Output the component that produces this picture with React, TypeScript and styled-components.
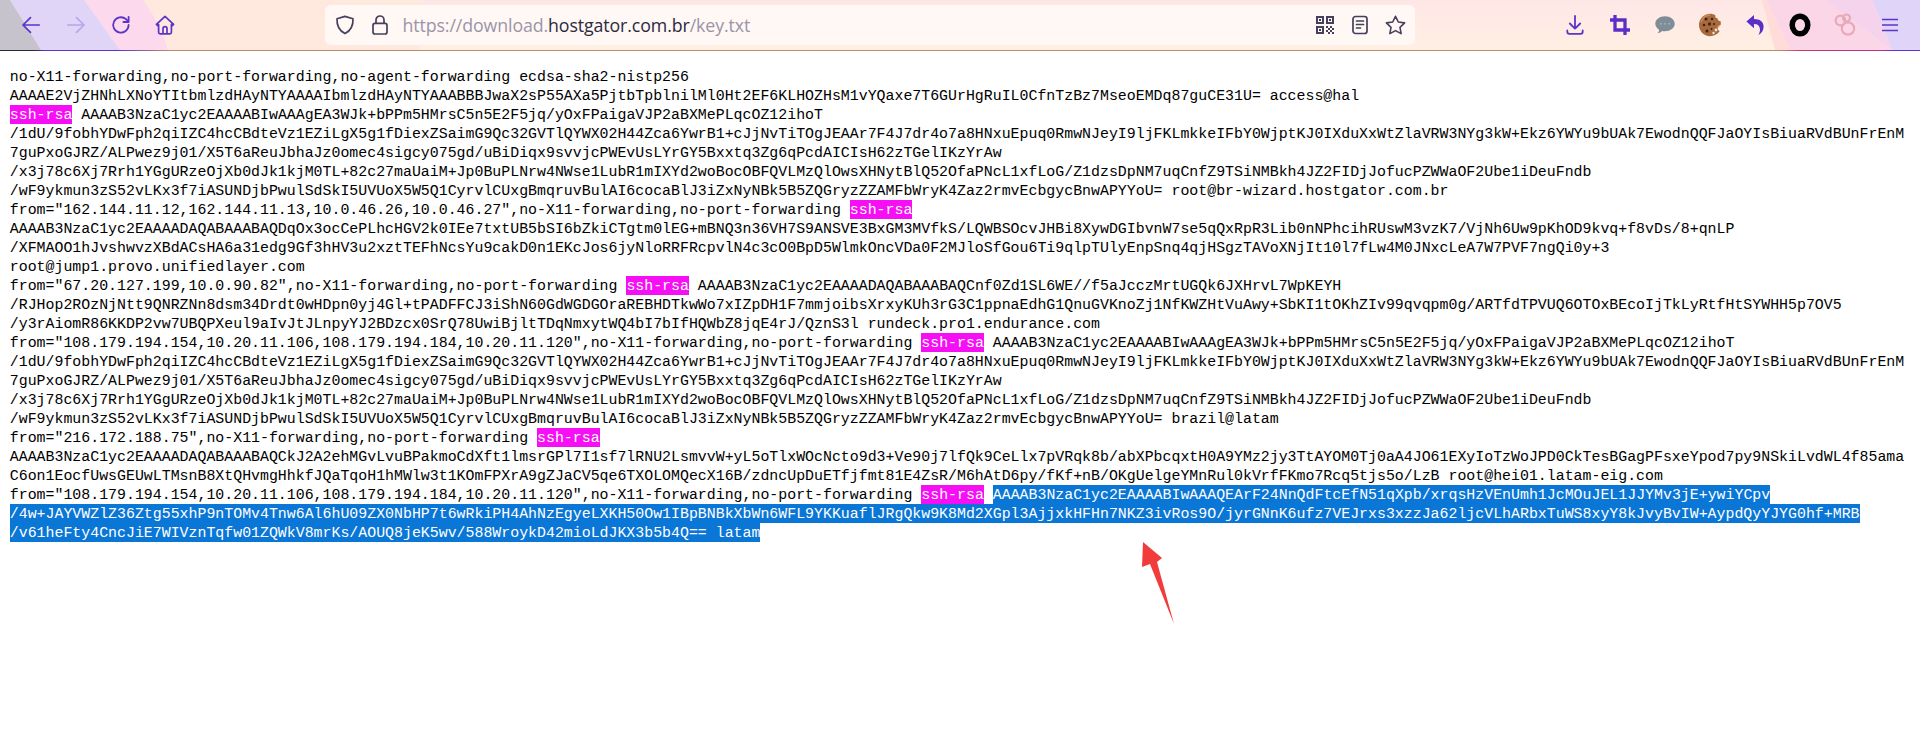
import React from "react";
import styled, { createGlobalStyle } from "styled-components";

const Global = createGlobalStyle`
  html, body { margin: 0; padding: 0; background: #fff; }
  #root { width: 1920px; height: 746px; overflow: hidden; position: relative; }
`;

const Page = styled.div`
  position: relative;
  width: 1920px;
  height: 746px;
  background: #fff;
`;

const Toolbar = styled.header`
  position: relative;
  display: flex;
  align-items: center;
  justify-content: space-between;
  box-sizing: border-box;
  height: 51px;
  padding: 0 8px 1px 8px;
  background: linear-gradient(180deg, #ffe6e6 0%, #fff0e3 100%);
  overflow: hidden;
  &::after {
    content: "";
    position: absolute;
    left: 0;
    right: 0;
    bottom: 0;
    height: 1px;
    background: linear-gradient(90deg, #2a2a33 0, #2a2a33 34px, #5a35c4 44px, #5a35c4 116px, #bf8a70 170px, #c08a6f 1780px, #c9386c 1800px, #c32f8c 1880px, #5a35d0 1893px);
  }
`;

const ThemeArt = styled.svg`
  position: absolute;
  left: 0;
  top: 0;
  width: 1920px;
  height: 50px;
`;

const IconGroup = styled.div`
  position: relative;
  display: flex;
  align-items: center;
`;

const IconSlot = styled.div<{ $w?: number }>`
  display: flex;
  align-items: center;
  justify-content: center;
  width: ${(p) => p.$w ?? 45}px;
  height: 40px;
  flex: none;
`;

const UrlBar = styled.div`
  position: relative;
  display: flex;
  align-items: center;
  box-sizing: border-box;
  width: 1090px;
  height: 40px;
  padding-left: 2px;
  background: #fff8f4;
  border-radius: 6px;
`;

const UrlText = styled.div`
  flex: 1;
  margin-left: 6px;
  font-family: "Open Sans", "Noto Sans", sans-serif;
  font-size: 17.75px;
  letter-spacing: -0.1px;
  line-height: 40px;
  color: #9a95a8;
  white-space: pre;
`;

const Host = styled.span`
  color: #2b2a3f;
`;

const UrlActions = styled.div`
  display: flex;
  align-items: center;
  margin-right: 2px;
`;

const Content = styled.main`
  padding: 16px 0 0 9.8px;
  font-family: "Liberation Mono", "DejaVu Sans Mono", monospace;
  font-size: 14.9px;
  color: #000;
`;

const Row = styled.div`
  height: 19px;
  line-height: 21px;
  white-space: pre;
`;

const Mark = styled.span`
  display: inline-block;
  height: 19px;
  background: #f60ff5;
  color: #fff;
`;

const Picked = styled.span`
  display: inline-block;
  height: 19px;
  background: #0a76d6;
  color: #fff;
`;

const Pointer = styled.svg`
  position: absolute;
  left: 1130px;
  top: 535px;
  width: 56px;
  height: 95px;
`;

const violet = "#5a35c8";
const slate = "#45405c";

const Back = ({ color = violet, flip = false }: { color?: string; flip?: boolean }) => (
  <svg width="20" height="20" viewBox="0 0 20 20" fill="none" stroke={color} strokeWidth="1.7" strokeLinecap="round" strokeLinejoin="round" style={flip ? { transform: "scaleX(-1)" } : undefined}>
    <path d="M18.2 10H2M9.5 2.6 2 10l7.5 7.4" />
  </svg>
);

const Reload = () => (
  <svg width="20" height="20" viewBox="0 0 20 20" fill="none" stroke={violet} strokeWidth="1.8" strokeLinecap="round" strokeLinejoin="round">
    <path d="M17.6 10a7.7 7.7 0 1 1-2.6-5.8L17.3 6.4" />
    <path d="M17.6 1.8v5.2h-5.2" />
  </svg>
);

const Home = () => (
  <svg width="20" height="20" viewBox="0 0 20 20" fill="none" stroke={violet} strokeWidth="1.7" strokeLinejoin="round">
    <path d="M1.4 9.3 10 1.3l8.6 8-1 1.2-1.2-1v7.8a1.6 1.6 0 0 1-1.6 1.6H5.2a1.6 1.6 0 0 1-1.6-1.6V9.5l-1.2 1z" />
    <path d="M8 18.9v-5.2a2 2 0 0 1 4 0v5.2" />
  </svg>
);

const Shield = () => (
  <svg width="20" height="20" viewBox="0 0 20 20" fill="none" stroke={slate} strokeWidth="1.7" strokeLinejoin="round">
    <path d="M10 1.4 18 3.8c.3 6.6-1.9 11.9-8 14.8C3.900 15.700 1.700 10.400 2 3.800z" />
  </svg>
);

const Lock = () => (
  <svg width="18" height="20" viewBox="0 0 18 20" fill="none" stroke={slate} strokeWidth="1.7">
    <rect x="2" y="8.400" width="14" height="10.600" rx="2" />
    <path d="M5 8.400V5a4 4 0 0 1 8 0v3.400" />
  </svg>
);

const Qr = () => (
  <svg width="18" height="18" viewBox="0 0 18 18" fill={slate}>
    <path d="M0 0h8v8H0zm2 2v4h4V2zM10 0h8v8h-8zm2 2v4h4V2zM0 10h8v8H0zm2 2v4h4v-4z" fillRule="evenodd" />
    <path d="M3 3h2v2H3zM13 3h2v2h-2zM3 13h2v2H3zM10 10h2v2h-2zM14 10h2v2h-2zM12 12h2v2h-2zM16 12h2v2h-2zM10 14h2v2h-2zM14 14h2v2h-2zM12 16h2v2h-2zM16 16h2v2h-2z" />
  </svg>
);

const Reader = () => (
  <svg width="16" height="20" viewBox="0 0 16 20" fill="none" stroke={slate} strokeWidth="1.7" strokeLinecap="round">
    <rect x="1" y="1.500" width="14" height="17" rx="2.500" />
    <path d="M4.500 6h7M4.500 9.500h7M4.500 13h4" />
  </svg>
);

const Star = () => (
  <svg width="21" height="20" viewBox="0 0 21 20" fill="none" stroke={slate} strokeWidth="1.6" strokeLinejoin="round">
    <path d="M10.500 1.300 13.300 7l6.300.9-4.600 4.400 1.100 6.300-5.600-3-5.600 3 1.100-6.300L1.400 7.900 7.700 7z" />
  </svg>
);

const Download = () => (
  <svg width="18" height="20" viewBox="0 0 18 20" fill="none" stroke={violet} strokeWidth="1.8" strokeLinecap="round" strokeLinejoin="round">
    <path d="M9 1v12.500M3.800 8.500 9 13.700l5.200-5.200" />
    <path d="M1.300 15.500v1.300a2 2 0 0 0 2 2h11.400a2 2 0 0 0 2-2v-1.300" />
  </svg>
);

const Crop = () => (
  <svg width="20" height="20" viewBox="0 0 20 20" fill="none" stroke="#5a2fc8" strokeWidth="3.300">
    <path d="M5 0v15h15" />
    <path d="M0 5h15v15" />
  </svg>
);

const Chat = () => (
  <svg width="20" height="20" viewBox="0 0 20 20" fill="#7f8d99">
    <path d="M10 1.300c5.300 0 9.700 3.300 9.700 7.500s-4.400 7.500-9.700 7.500c-1 0-1.900-.1-2.800-.3-1.100 1.200-2.900 2.200-4.900 2.300 1-.9 1.700-2 1.900-3.400C1.800 13.100.3 11.100.3 8.800c0-4.200 4.400-7.500 9.700-7.500z" />
    <circle cx="5.800" cy="8.800" r="1" fill="#a3adb6" />
    <circle cx="10" cy="8.800" r="1" fill="#a3adb6" />
    <circle cx="14.200" cy="8.800" r="1" fill="#a3adb6" />
  </svg>
);

const Cookie = () => (
  <svg width="22" height="24" viewBox="0 0 22 24">
    <path d="M11 .8c2 0 3.800.5 5.300 1.500-.4 1.700.7 3 2.300 3.100.1 1.700 1.200 2.600 2.900 2.700.3 1.200.4 2.500.2 3.900-1.700.3-3.200 2-3 3.700.2 1.300 1 2 2 2.300C18.700 21.200 15 23.200 11 23.200 4.900 23.200 0 18.200 0 12S4.900.8 11 .8z" fill="#a86a3c" />
    <path d="M2 9c2-5 5-7 9-7" stroke="#c78d5a" strokeWidth="1.500" fill="none" />
    <circle cx="7" cy="6" r="1.500" fill="#3d2314" />
    <circle cx="13" cy="6" r="1.200" fill="#3d2314" />
    <circle cx="5" cy="12" r="1.300" fill="#3d2314" />
    <circle cx="10.500" cy="11" r="1.700" fill="#4a2a18" />
    <circle cx="15" cy="11" r="1.100" fill="#3d2314" />
    <circle cx="8" cy="18" r="1.500" fill="#3d2314" />
    <circle cx="12.500" cy="16" r="1" fill="#3d2314" />
    <circle cx="17" cy="17" r="1.400" fill="#efe4da" />
    <circle cx="14.500" cy="20" r="1.200" fill="#efe4da" />
    <circle cx="19.500" cy="13.500" r="1" fill="#d9a57a" />
  </svg>
);

const Undo = () => (
  <svg width="18" height="22" viewBox="0 0 18 22" fill="#5a2fc8">
    <path d="M8 1 .4 7.600 8 14.200V10c3.700 0 5.700 1.900 6 5.300.1 2-.6 4.200-1.700 5.700 3.500-1.800 5.300-4.800 5.300-8.600C17.600 7.700 13.800 5 8 5z" />
  </svg>
);

const Ring = () => (
  <svg width="22" height="24" viewBox="0 0 22 24" fill="none" stroke="#000">
    <ellipse cx="11" cy="12" rx="7.800" ry="8.800" strokeWidth="5.500" />
  </svg>
);

const Rings = () => (
  <svg width="22" height="24" viewBox="0 0 22 24" fill="none" stroke="#e8a9b9" strokeWidth="2.200">
    <circle cx="6.500" cy="7.500" r="4.800" />
    <circle cx="12.500" cy="5" r="3.500" />
    <circle cx="14" cy="15.500" r="6.200" />
  </svg>
);

const Menu = () => (
  <svg width="16" height="14" viewBox="0 0 16 14" fill="none" stroke={violet} strokeWidth="1.600">
    <path d="M0 1.500h16M0 7h16M0 12.500h16" />
  </svg>
);

const sshBlockA = "/1dU/9fobhYDwFph2qiIZC4hcCBdteVz1EZiLgX5g1fDiexZSaimG9Qc32GVTlQYWX02H44Zca6YwrB1+cJjNvTiTOgJEAAr7F4J7dr4o7a8HNxuEpuq0RmwNJeyI9ljFKLmkkeIFbY0WjptKJ0IXduXxWtZlaVRW3NYg3kW+Ekz6YWYu9bUAk7EwodnQQFJaOYIsBiuaRVdBUnFrEnM";
const sshBlockB = "7guPxoGJRZ/ALPwez9j01/X5T6aReuJbhaJz0omec4sigcy075gd/uBiDiqx9svvjcPWEvUsLYrGY5Bxxtq3Zg6qPcdAICIsH62zTGelIKzYrAw";
const sshBlockC = "/x3j78c6Xj7Rrh1YGgURzeOjXb0dJk1kjM0TL+82c27maUaiM+Jp0BuPLNrw4NWse1LubR1mIXYd2woBocOBFQVLMzQlOwsXHNytBlQ52OfaPNcL1xfLoG/Z1dzsDpNM7uqCnfZ9TSiNMBkh4JZ2FIDjJofucPZWWaOF2Ube1iDeuFndb";
const sshBlockD = "/wF9ykmun3zS52vLKx3f7iASUNDjbPwulSdSkI5UVUoX5W5Q1CyrvlCUxgBmqruvBulAI6cocaBlJ3iZxNyNBk5B5ZQGryzZZAMFbWryK4Zaz2rmvEcbgycBnwAPYYoU= ";
const sshHead = " AAAAB3NzaC1yc2EAAAABIwAAAgEA3WJk+bPPm5HMrsC5n5E2F5jq/yOxFPaigaVJP2aBXMePLqcOZ12ihoT";
const multiFrom = 'from="108.179.194.154,10.20.11.106,108.179.194.184,10.20.11.120",no-X11-forwarding,no-port-forwarding ';

export default function App() {
  return (
    <Page>
      <Global />
      <Toolbar>
        <ThemeArt viewBox="0 0 1920 50" preserveAspectRatio="none">
          <polygon points="143,0 420,0 420,50 168,50" fill="#ffe9df" />
          <path d="M84,0 L143,0 C152,12 162,30 168,50 L120,50 Z" fill="#fdd9ee" />
          <polygon points="10,0 84,0 120,50 41,50" fill="#e1d5f7" />
          <polygon points="0,0 10,0 41,50 0,50" fill="#c6c3cd" />
          <path d="M1766,0 L1825,0 L1892,50 L1790,50 Z" fill="#fbd6e6" />
          <path d="M1762,0 L1766,0 L1790,50 L1775,50 Z" fill="#ffdcd8" />
          <polygon points="1825,0 1920,0 1920,50 1892,50 1872,0" fill="#e0d5f8" />
          <polygon points="1825,0 1872,0 1892,50" fill="#f6d3ec" />
        </ThemeArt>
        <IconGroup>
          <IconSlot><Back /></IconSlot>
          <IconSlot><Back color="#b6a6ea" flip /></IconSlot>
          <IconSlot><Reload /></IconSlot>
          <IconSlot $w={44}><Home /></IconSlot>
        </IconGroup>
        <UrlBar>
          <IconSlot $w={37}><Shield /></IconSlot>
          <IconSlot $w={33}><Lock /></IconSlot>
          <UrlText>https://download.<Host>hostgator.com.br</Host>/key.txt</UrlText>
          <UrlActions>
            <IconSlot $w={35}><Qr /></IconSlot>
            <IconSlot $w={35}><Reader /></IconSlot>
            <IconSlot $w={35}><Star /></IconSlot>
          </UrlActions>
        </UrlBar>
        <IconGroup>
          <IconSlot><Download /></IconSlot>
          <IconSlot><Crop /></IconSlot>
          <IconSlot><Chat /></IconSlot>
          <IconSlot><Cookie /></IconSlot>
          <IconSlot><Undo /></IconSlot>
          <IconSlot><Ring /></IconSlot>
          <IconSlot><Rings /></IconSlot>
          <IconSlot><Menu /></IconSlot>
        </IconGroup>
      </Toolbar>
      <Content>
        <Row>no-X11-forwarding,no-port-forwarding,no-agent-forwarding ecdsa-sha2-nistp256</Row>
        <Row>AAAAE2VjZHNhLXNoYTItbmlzdHAyNTYAAAAIbmlzdHAyNTYAAABBBJwaX2sP55AXa5PjtbTpblnilMl0Ht2EF6KLHOZHsM1vYQaxe7T6GUrHgRuIL0CfnTzBz7MseoEMDq87guCE31U= access@hal</Row>
        <Row><Mark>ssh-rsa</Mark>{sshHead}</Row>
        <Row>{sshBlockA}</Row>
        <Row>{sshBlockB}</Row>
        <Row>{sshBlockC}</Row>
        <Row>{sshBlockD}root@br-wizard.hostgator.com.br</Row>
        <Row>from="162.144.11.12,162.144.11.13,10.0.46.26,10.0.46.27",no-X11-forwarding,no-port-forwarding <Mark>ssh-rsa</Mark></Row>
        <Row>AAAAB3NzaC1yc2EAAAADAQABAAABAQDqOx3ocCePLhcHGV2k0IEe7txtUB5bSI6bZkiCTgtm0lEG+mBNQ3n36VH7S9ANSVE3BxGM3MVfkS/LQWBSOcvJHBi8XywDGIbvnW7se5qQxRpR3Lib0nNPhcihRUswM3vzK7/VjNh6Uw9pKhOD9kvq+f8vDs/8+qnLP</Row>
        <Row>/XFMAOO1hJvshwvzXBdACsHA6a31edg9Gf3hHV3u2xztTEFhNcsYu9cakD0n1EKcJos6jyNloRRFRcpvlN4c3cO0BpD5WlmkOncVDa0F2MJloSfGou6Ti9qlpTUlyEnpSnq4qjHSgzTAVoXNjIt10l7fLw4M0JNxcLeA7W7PVF7ngQi0y+3</Row>
        <Row>root@jump1.provo.unifiedlayer.com</Row>
        <Row>from="67.20.127.199,10.0.90.82",no-X11-forwarding,no-port-forwarding <Mark>ssh-rsa</Mark> AAAAB3NzaC1yc2EAAAADAQABAAABAQCnf0Zd1SL6WE//f5aJcczMrtUGQk6JXHrvL7WpKEYH</Row>
        <Row>/RJHop2ROzNjNtt9QNRZNn8dsm34Drdt0wHDpn0yj4Gl+tPADFFCJ3iShN60GdWGDGOraREBHDTkwWo7xIZpDH1F7mmjoibsXrxyKUh3rG3C1ppnaEdhG1QnuGVKnoZj1NfKWZHtVuAwy+SbKI1tOKhZIv99qvqpm0g/ARTfdTPVUQ6OTOxBEcoIjTkLyRtfHtSYWHH5p7OV5</Row>
        <Row>/y3rAiomR86KKDP2vw7UBQPXeul9aIvJtJLnpyYJ2BDzcx0SrQ78UwiBjltTDqNmxytWQ4bI7bIfHQWbZ8jqE4rJ/QznS3l rundeck.pro1.endurance.com</Row>
        <Row>{multiFrom}<Mark>ssh-rsa</Mark>{sshHead}</Row>
        <Row>{sshBlockA}</Row>
        <Row>{sshBlockB}</Row>
        <Row>{sshBlockC}</Row>
        <Row>{sshBlockD}brazil@latam</Row>
        <Row>from="216.172.188.75",no-X11-forwarding,no-port-forwarding <Mark>ssh-rsa</Mark></Row>
        <Row>AAAAB3NzaC1yc2EAAAADAQABAAABAQCkJ2A2ehMGvLvuBPakmoCdXft1lmsrGPl7I1sf7lRNU2LsmvvW+yL5oTlxWOcNcto9d3+Ve90j7lfQk9CeLlx7pVRqk8b/abXPbcqxtH0A9YMz2jy3TtAYOM0Tj0aA4JO61EXyIoTzWoJPD0CkTesBGagPFsxeYpod7py9NSkiLvdWL4f85ama</Row>
        <Row>C6on1EocfUwsGEUwLTMsnB8XtQHvmgHhkfJQaTqoH1hMWlw3t1KOmFPXrA9gZJaCV5qe6TXOLOMQecX16B/zdncUpDuETfjfmt81E4ZsR/M6hAtD6py/fKf+nB/OKgUelgeYMnRul0kVrfFKmo7Rcq5tjs5o/LzB root@hei01.latam-eig.com</Row>
        <Row>{multiFrom}<Mark>ssh-rsa</Mark> <Picked>AAAAB3NzaC1yc2EAAAABIwAAAQEArF24NnQdFtcEfN51qXpb/xrqsHzVEnUmh1JcMOuJEL1JJYMv3jE+ywiYCpv</Picked></Row>
        <Row><Picked>/4w+JAYVWZlZ36Ztg55xhP9nTOMv4Tnw6Al6hU09ZX0NbHP7t6wRkiPH4AhNzEgyeLXKH50Ow1IBpBNBkXbWn6WFL9YKKuaflJRgQkw9K8Md2XGpl3AjjxkHFHn7NKZ3ivRos9O/jyrGNnK6ufz7VEJrxs3xzzJa62ljcVLhARbxTuWS8xyY8kJvyBvIW+AypdQyYJYG0hf+MRB</Picked></Row>
        <Row><Picked>/v61heFty4CncJiE7WIVznTqfw01ZQWkV8mrKs/AOUQ8jeK5wv/588WroykD42mioLdJKX3b5b4Q== latam</Picked></Row>
      </Content>
      <Pointer viewBox="1130 535 56 95">
        <polygon points="1143,542 1162,558 1157,562 1174,624 1150,564 1142,567" fill="#f23c3c" />
      </Pointer>
    </Page>
  );
}
